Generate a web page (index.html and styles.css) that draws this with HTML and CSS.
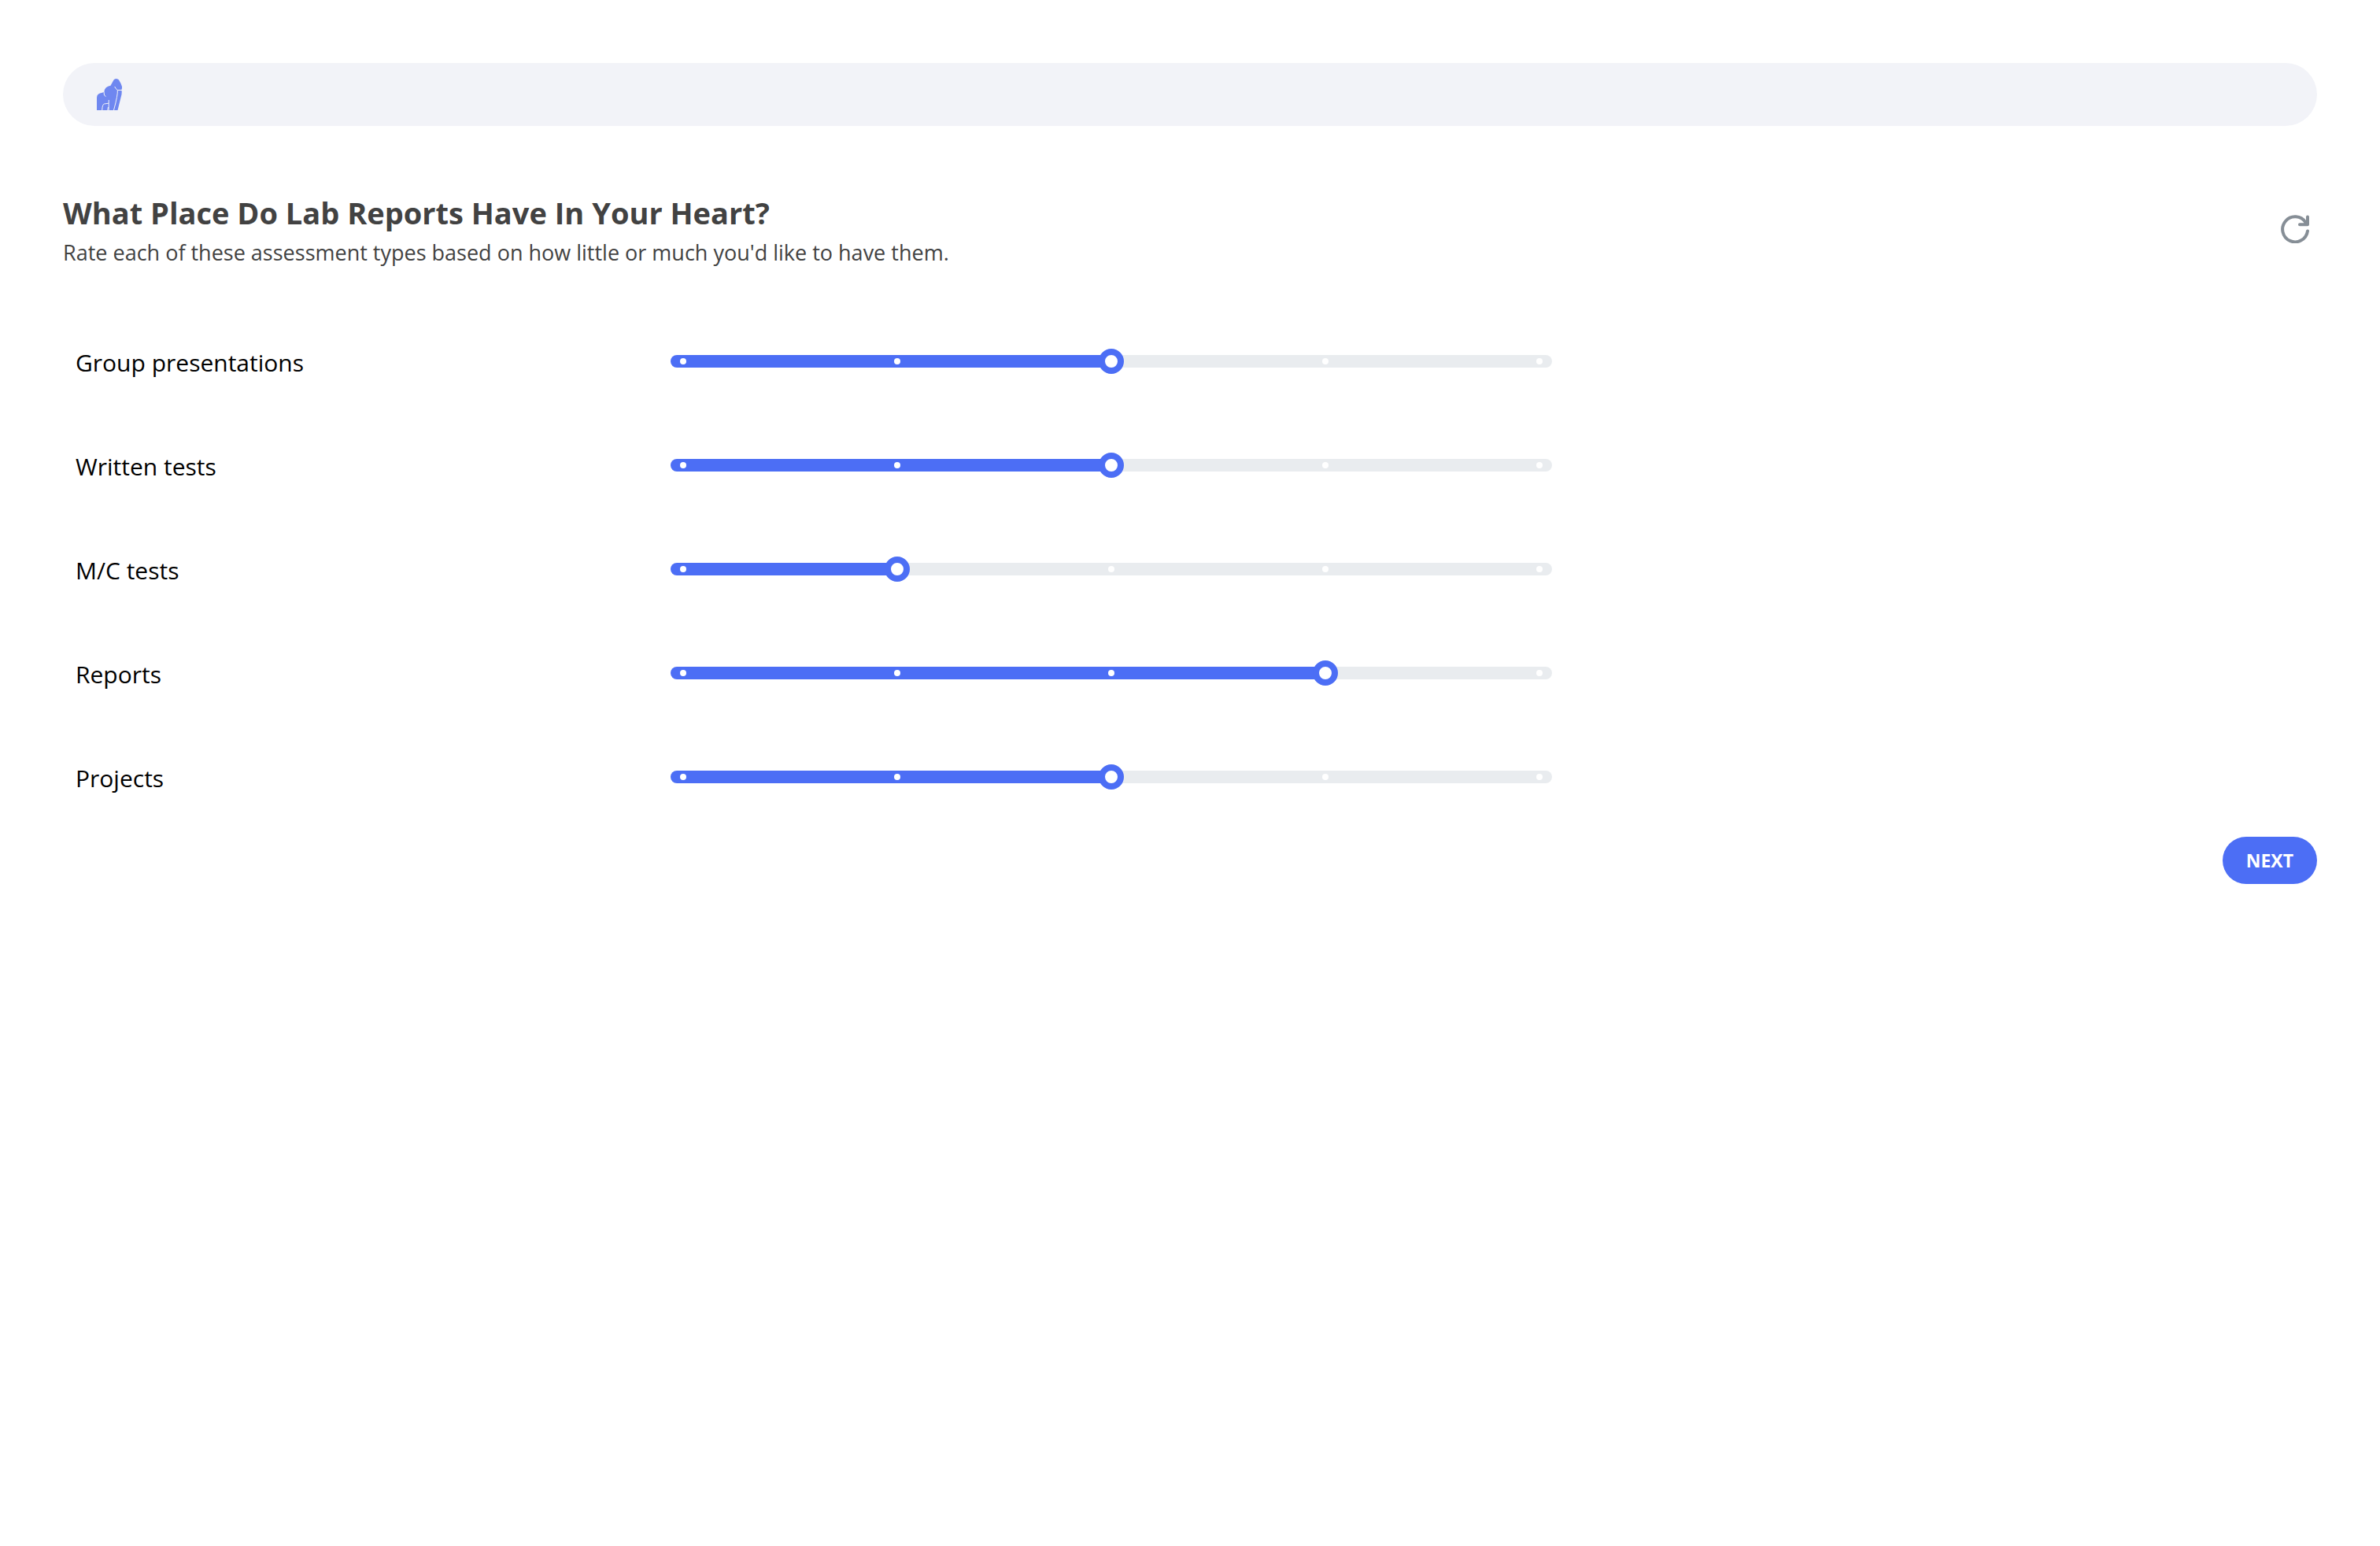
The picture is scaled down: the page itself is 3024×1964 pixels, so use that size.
FILE: index.html
```html
<!DOCTYPE html>
<html lang="en">
<head>
<meta charset="utf-8">
<meta name="viewport" content="width=device-width, initial-scale=1">
<title>Assessment preferences</title>
<link rel="stylesheet" href="styles.css">
</head>
<body>
<div class="page">
  <header class="topbar">
    <svg class="logo" viewBox="0 0 32 40" role="img" aria-label="Gorilla logo">
      <path class="logo-body" d="M0 40V24Q0 18.500 7 17.800L9.500 16.500Q10 10 17.500 8.800L21.500 1.500Q22.500 0 24.500 0Q27 0 28 1.500L30.500 6L32 10Q32.300 13 31 14.500L31.800 16L31.500 20L26.500 40H13L14.500 31.500V40H0Z"/>
      <path class="logo-line" d="M9 16.500L9.500 21L11.500 22.500M6.700 40Q7 32.500 9.500 32L15 31.200M15.200 27V40M14.400 36L13.800 40M22.700 10Q24 13 26.500 14.500H32M26.300 14.500Q27 20 21.500 40"/>
    </svg>
  </header>
  <main>
    <div class="heading">
      <div>
        <h1 class="title">What Place Do Lab Reports Have In Your Heart?</h1>
        <p class="subtitle">Rate each of these assessment types based on how little or much you'd like to have them.</p>
      </div>
      <button class="reset" type="button" aria-label="Reset">
        <svg class="reset-icon" viewBox="0 0 36 36" aria-hidden="true">
          <path d="M34 20.500A16 16 0 1 1 31.500 9.500L33.500 12M34 2.500V12.200H24"/>
          <path class="reset-tip" d="M34 6V12.500H28L31 9Z"/>
        </svg>
      </button>
    </div>
    <form class="ratings">
      <div class="row">
        <label class="label" for="group">Group presentations</label>
        <div class="slider"><input class="range v3" id="group" type="range" min="1" max="5" value="3"><span class="ticks"><i></i><i></i><i class="hid"></i><i></i><i></i></span></div>
      </div>
      <div class="row">
        <label class="label" for="written">Written tests</label>
        <div class="slider"><input class="range v3" id="written" type="range" min="1" max="5" value="3"><span class="ticks"><i></i><i></i><i class="hid"></i><i></i><i></i></span></div>
      </div>
      <div class="row">
        <label class="label" for="mc">M/C tests</label>
        <div class="slider"><input class="range v2" id="mc" type="range" min="1" max="5" value="2"><span class="ticks"><i></i><i class="hid"></i><i></i><i></i><i></i></span></div>
      </div>
      <div class="row">
        <label class="label" for="reports">Reports</label>
        <div class="slider"><input class="range v4" id="reports" type="range" min="1" max="5" value="4"><span class="ticks"><i></i><i></i><i></i><i class="hid"></i><i></i></span></div>
      </div>
      <div class="row">
        <label class="label" for="projects">Projects</label>
        <div class="slider"><input class="range v3" id="projects" type="range" min="1" max="5" value="3"><span class="ticks"><i></i><i></i><i class="hid"></i><i></i><i></i></span></div>
      </div>
      <div class="actions"><button class="next" type="button">NEXT</button></div>
    </form>
  </main>
</div>
</body>
</html>
```
FILE: styles.css
```css
* { box-sizing: border-box; }
body {
  margin: 0;
  background: #fff;
  color: #000;
  font-family: "Segoe UI", "Open Sans", "Noto Sans", sans-serif;
}
.page { padding: 80px; }
.topbar {
  display: flex;
  align-items: center;
  height: 80px;
  padding: 0 43px;
  border-radius: 40px;
  background: #f2f3f8;
}
.logo { width: 32px; height: 40px; }
.logo-body { fill: #6f87f0; }
.logo-line { fill: none; stroke: #f2f3f8; stroke-width: 1; }
.heading {
  display: flex;
  justify-content: space-between;
  align-items: center;
  margin-top: 80px;
  color: #424242;
}
.title { margin: 0; font-size: 38px; line-height: 60px; font-weight: 700; }
.subtitle { margin: 0; font-size: 27px; line-height: 42px; }
.reset {
  display: flex;
  margin-right: 10px;
  padding: 0;
  border: 0;
  background: none;
  color: #868e96;
}
.reset-icon {
  width: 36px;
  height: 36px;
  fill: none;
  stroke: currentColor;
  stroke-width: 4;
  stroke-linecap: round;
  stroke-linejoin: round;
}
.reset-tip { fill: currentColor; stroke: none; }
.ratings { margin-top: 51px; }
.row {
  display: grid;
  grid-template-columns: 189fr 280fr 243fr;
  align-items: center;
  height: 132px;
  padding-left: 16px;
}
.label { padding-top: 4px; font-size: 30px; line-height: 48px; }
.slider { position: relative; display: flex; height: 32px; }
.range {
  appearance: none;
  -webkit-appearance: none;
  width: 100%;
  height: 32px;
  margin: 0;
  background: none;
}
.range::-webkit-slider-runnable-track {
  height: 16px;
  border-radius: 8px;
  background: linear-gradient(to right, #4c6ef5 var(--fill), #e9ecef var(--fill));
}
.range::-webkit-slider-thumb {
  -webkit-appearance: none;
  width: 32px;
  height: 32px;
  margin-top: -8px;
  border: 8px solid #4c6ef5;
  border-radius: 50%;
  background: #fff;
}
.v2 { --fill: 26%; }
.v3 { --fill: 50%; }
.v4 { --fill: 74%; }
.ticks {
  position: absolute;
  inset: 0 12px;
  display: flex;
  justify-content: space-between;
  align-items: center;
  pointer-events: none;
}
.ticks i { width: 8px; height: 8px; border-radius: 50%; background: #fff; }
.ticks .hid { visibility: hidden; }
.actions { display: flex; justify-content: flex-end; margin-top: 10px; }
.next {
  height: 60px;
  padding: 0 30px;
  border: 0;
  border-radius: 30px;
  background: #4c6ef5;
  color: #fff;
  font-family: inherit;
  font-size: 23px;
  font-weight: 700;
}
```
